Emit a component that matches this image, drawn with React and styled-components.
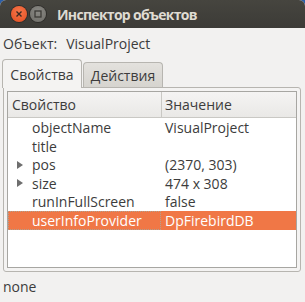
import React from 'react';
import styled, { createGlobalStyle } from 'styled-components';

const GlobalStyle = createGlobalStyle`
  html, body {
    margin: 0;
    padding: 0;
    background: #2a5ea8;
  }
  body {
    font-family: "Open Sans", "Noto Sans", sans-serif;
    font-size: 14px;
    color: #3c3c3c;
  }
`;

const Window = styled.div`
  width: 305px;
  height: 302px;
  display: flex;
  flex-direction: column;
  border-radius: 6px 6px 0 0;
  overflow: hidden;
  background: #f2f1f0;
`;

const TitleBar = styled.div`
  height: 28px;
  display: flex;
  align-items: center;
  padding-left: 11px;
  gap: 2px;
  background: linear-gradient(#46453f, #3c3b37);
`;

const WinButton = styled.div`
  width: 16px;
  height: 16px;
  border-radius: 50%;
  display: flex;
  align-items: center;
  justify-content: center;
  background: ${(p) => (p.$close ? 'radial-gradient(circle at 50% 35%, #f6764a, #e24d20)' : 'radial-gradient(circle at 50% 35%, #8a8984, #6d6c67)')};
  box-shadow: 0 0 0 1px #2e2d2a;
  margin-right: 1px;
`;

const Title = styled.div`
  margin-left: 8px;
  font-weight: 700;
  font-size: 14px;
  color: #dfdbd2;
  letter-spacing: -0.7px;
`;

const Body = styled.div`
  flex: 1;
  display: flex;
  flex-direction: column;
  padding: 0 4px 0 3px;
`;

const ObjectLine = styled.div`
  height: 29px;
  display: flex;
  align-items: center;
  gap: 9px;
  padding-top: 1px;
`;

const Tabs = styled.div`
  display: flex;
  align-items: flex-end;
  height: 29px;
  margin-left: -1px;
`;

const Tab = styled.div`
  height: ${(p) => (p.$active ? '29px' : '25px')};
  width: ${(p) => p.$w}px;
  box-sizing: border-box;
  display: flex;
  align-items: center;
  justify-content: center;
  border: 1px solid #b7b5b0;
  border-bottom: none;
  border-radius: 4px 4px 0 0;
  background: ${(p) => (p.$active ? '#f4f3f2' : 'linear-gradient(#e3e1dd, #d6d4cf)')};
  margin-right: 1px;
  position: relative;
  z-index: ${(p) => (p.$active ? 2 : 1)};
  margin-bottom: ${(p) => (p.$active ? '-1px' : '0')};
  padding-top: ${(p) => (p.$active ? '1px' : '0')};
`;

const Frame = styled.div`
  height: 185px;
  box-sizing: border-box;
  border: 1px solid #b7b5b0;
  border-radius: 0 3px 3px 3px;
  padding: 3px;
  background: #f4f3f2;
  display: flex;
`;

const Table = styled.div`
  flex: 1;
  border: 1px solid #a7a6a2;
  background: #ffffff;
  display: flex;
  flex-direction: column;
`;

const HeaderRow = styled.div`
  display: grid;
  grid-template-columns: 153px 1fr;
  height: 25px;
  background: linear-gradient(#f5f4f3, #e9e8e6);
  border-bottom: 1px solid #c9c8c4;
`;

const HeaderCell = styled.div`
  display: flex;
  align-items: center;
  padding-left: ${(p) => (p.$first ? 4 : 3)}px;
  border-left: ${(p) => (p.$first ? 'none' : '1px solid #c9c8c4')};
`;

const Row = styled.div`
  display: grid;
  grid-template-columns: 153px 1fr;
  height: 18.6px;
  align-items: center;
  background: ${(p) => (p.$selected ? '#f07746' : 'transparent')};
  color: ${(p) => (p.$selected ? '#ffffff' : '#3c3c3c')};
`;

const NameCell = styled.div`
  display: flex;
  align-items: center;
  height: 100%;
  box-sizing: border-box;
  outline: ${(p) => (p.$focus ? '1px dotted #b0a090' : 'none')};
  outline-offset: -1px;
`;

const Arrow = styled.div`
  width: 24px;
  padding-left: 9px;
  box-sizing: border-box;
  display: flex;
  align-items: center;
`;

const ValueCell = styled.div`
  padding-left: 4px;
`;

const Status = styled.div`
  flex: 1;
  display: flex;
  align-items: center;
  padding-bottom: 2px;
`;

const rows = [
  { name: 'objectName', value: 'VisualProject' },
  { name: 'title', value: '' },
  { name: 'pos', value: '(2370, 303)', expand: true },
  { name: 'size', value: '474 x 308', expand: true },
  { name: 'runInFullScreen', value: 'false' },
  { name: 'userInfoProvider', value: 'DpFirebirdDB', selected: true },
];

const Triangle = () => (
  <svg width="6" height="8" viewBox="0 0 6 8">
    <path d="M0 0 L6 4 L0 8 Z" fill="#6e6e6e" />
  </svg>
);

const App = () => (
  <>
    <GlobalStyle />
    <Window>
      <TitleBar>
        <WinButton $close>
          <svg width="8" height="8" viewBox="0 0 8 8">
            <path d="M1.5 1.5 L6.5 6.5 M6.5 1.5 L1.5 6.5" stroke="#3b2a22" strokeWidth="1.4" />
          </svg>
        </WinButton>
        <WinButton>
          <svg width="8" height="8" viewBox="0 0 8 8">
            <rect x="1" y="1" width="6" height="6" fill="none" stroke="#3c3b37" strokeWidth="1.3" />
          </svg>
        </WinButton>
        <Title>Инспектор объектов</Title>
      </TitleBar>
      <Body>
        <ObjectLine>
          <span>Объект:</span>
          <span>VisualProject</span>
        </ObjectLine>
        <Tabs>
          <Tab $active $w={80}>Свойства</Tab>
          <Tab $w={80}>Действия</Tab>
        </Tabs>
        <Frame>
          <Table>
            <HeaderRow>
              <HeaderCell $first>Свойство</HeaderCell>
              <HeaderCell>Значение</HeaderCell>
            </HeaderRow>
            {rows.map((r) => (
              <Row key={r.name} $selected={r.selected}>
                <NameCell $focus={r.selected}>
                  <Arrow>{r.expand && <Triangle />}</Arrow>
                  {r.name}
                </NameCell>
                <ValueCell>{r.value}</ValueCell>
              </Row>
            ))}
          </Table>
        </Frame>
        <Status>none</Status>
      </Body>
    </Window>
  </>
);

export default App;
